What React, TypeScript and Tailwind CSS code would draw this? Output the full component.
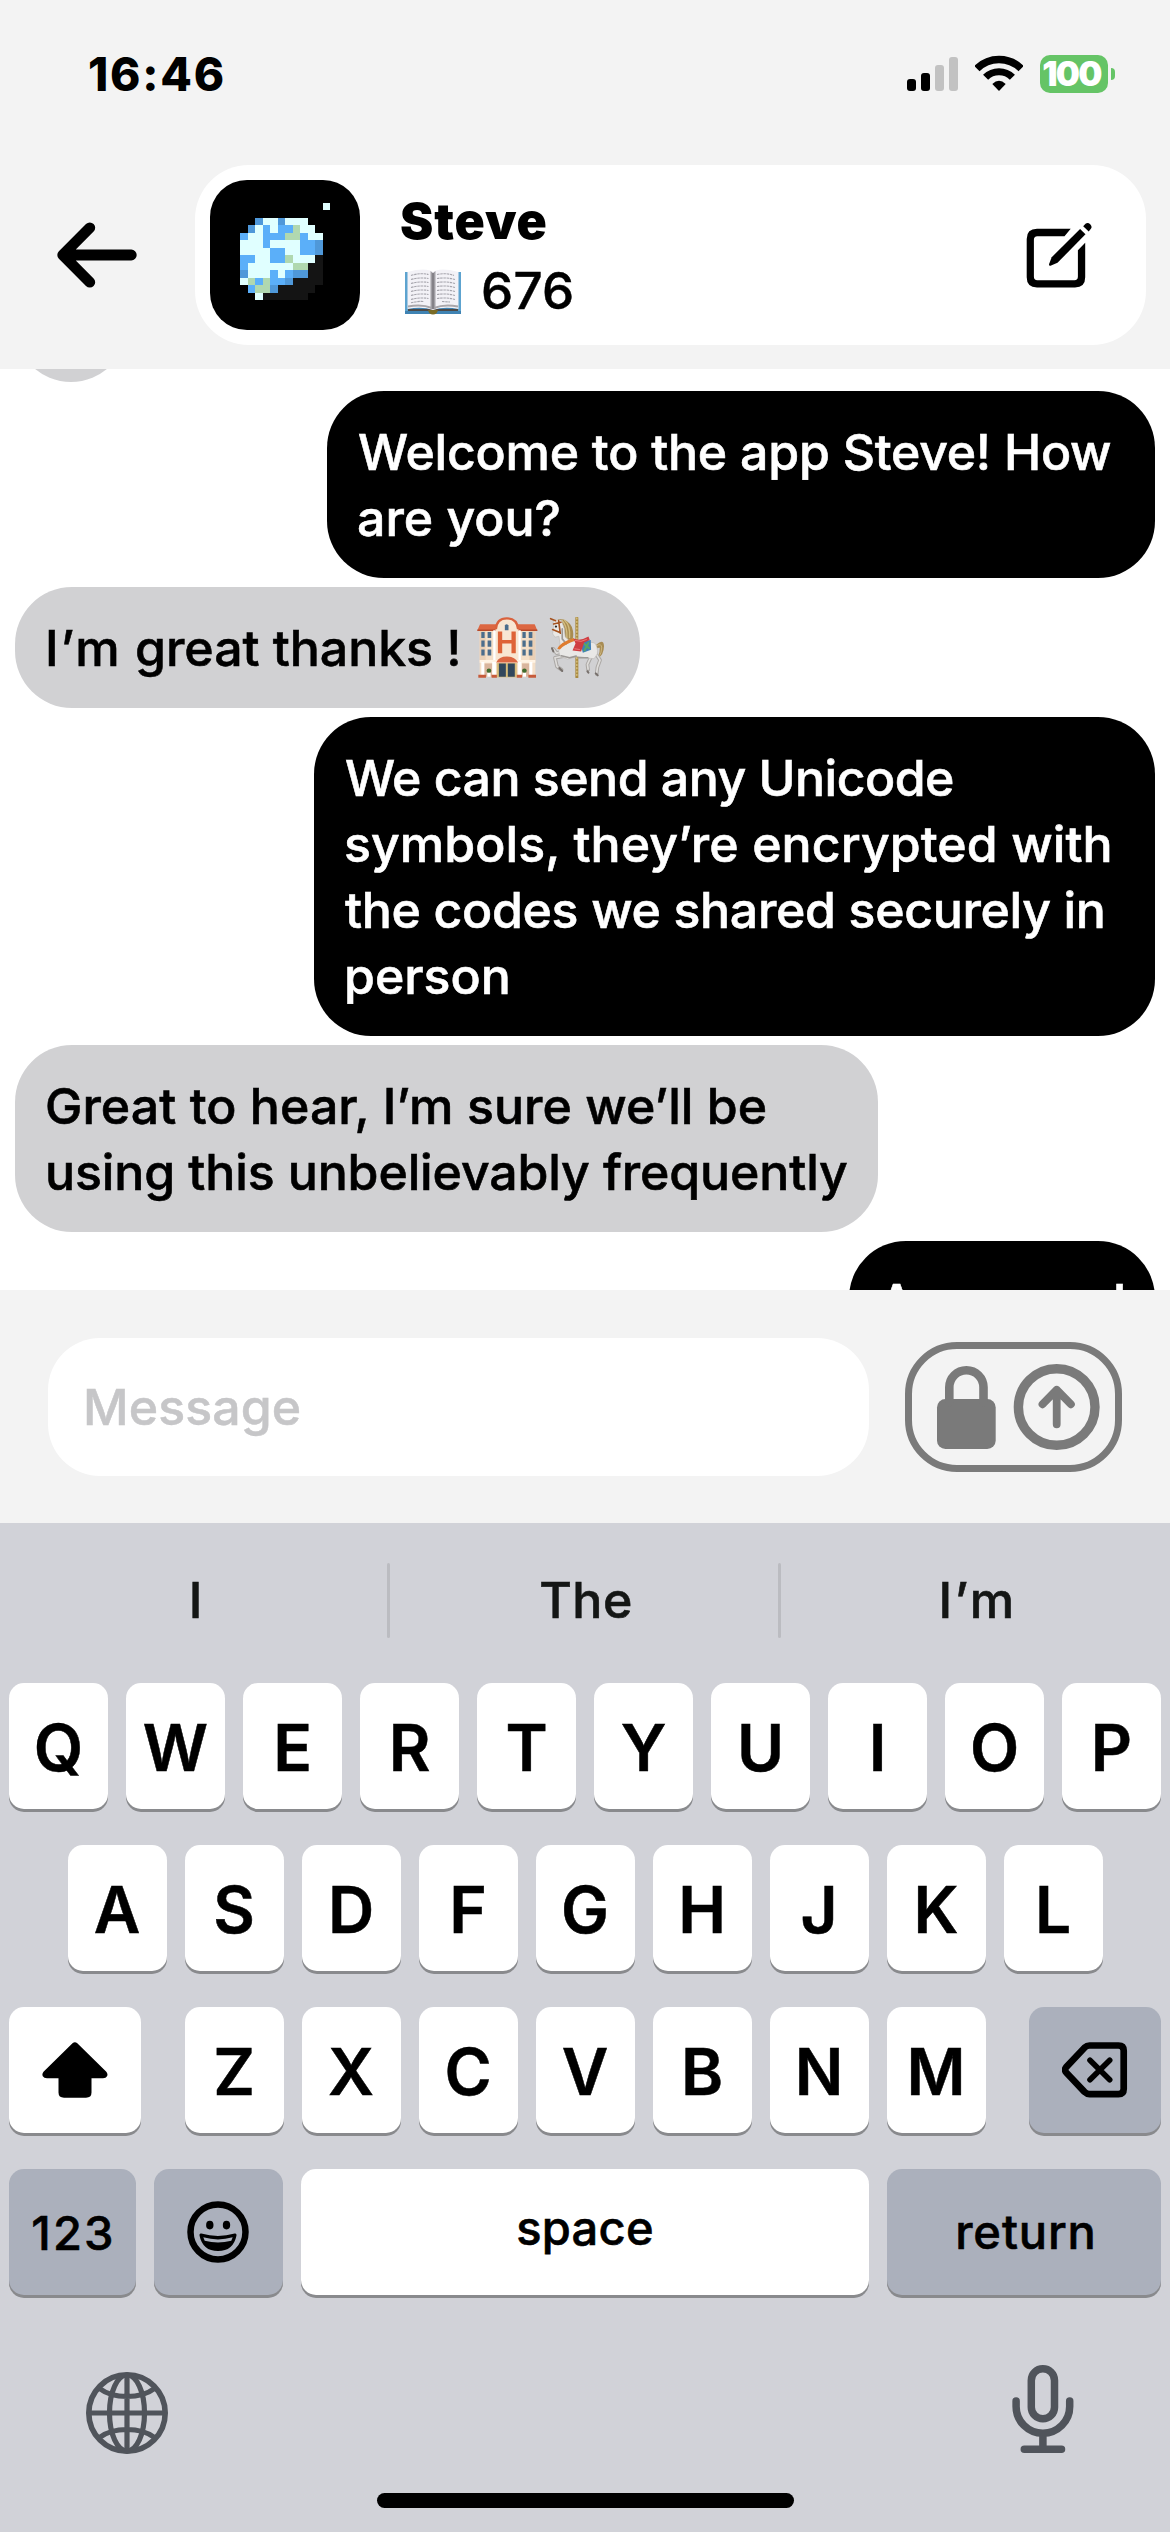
import type { ReactNode } from "react";

const PLANET = [
  "...............W....",
  "....................",
  "......DWWDWWW.......",
  ".....DWBWBBGWW......",
  "....BWWBBBGGBWW.....",
  "....WWWBWWWWBBD.....",
  "....WWWWBBWWBBD.....",
  "....BBWWBBGWWWK.....",
  "....BWWWWWWGGKK.....",
  "....DWWWBWBDDKK.....",
  "....WGBGBBDKKKK.....",
  ".....BGGDKKKKK......",
  "......WKKKKKK.......",
];

const PIXEL_FILL: Record<string, string> = {
  W: "#e0ffff",
  B: "#5baff9",
  D: "#4f98d9",
  G: "#b0d8b0",
  K: "#141414",
};

function Avatar() {
  return (
    <svg className="size-[150px] shrink-0 rounded-[37px] bg-black" viewBox="0 0 20 20" shapeRendering="crispEdges">
      {PLANET.flatMap((row, y) =>
        [...row].map((c, x) =>
          c === "." ? null : <rect key={`${x}-${y}`} x={x} y={y + 3} width={1} height={1} fill={PIXEL_FILL[c]} />,
        ),
      )}
    </svg>
  );
}

function BackArrow() {
  return (
    <svg className="h-[66px] w-[80px]" viewBox="57.5 222.5 80 66" fill="none" stroke="#000" strokeWidth={10.8} strokeLinecap="round" strokeLinejoin="round">
      <path d="M90.3 228.3 63.2 255.5 90.3 282.7M63.2 255.5H131.8" />
    </svg>
  );
}

function Book() {
  return (
    <svg className="h-[47px] w-[58px]" viewBox="0 0 58 47" role="img" aria-label="📖">
      <path d="M1 4H57V46H1Z" fill="#3f83b3" />
      <path d="M1 4H4V43H1ZM54 4H57V43H54Z" fill="#5da3cf" />
      <path d="M4 41H54V43H4Z" fill="#4d4a48" />
      <path d="M3.500 4Q18 0 26 2.500L29 4 32 2.500Q40 0 54.500 4V41Q40 38 29 42 18 38 3.500 41Z" fill="#f3f2f7" />
      <path d="M4 38.500Q18 36 28 40M54 38.500Q40 36 30 40" fill="none" stroke="#a9a6aa" strokeWidth={2} />
      <path d="M26.500 3 29 5 31.500 3V41H26.500Z" fill="#a19fa5" />
      <path d="M29 5V41" stroke="#66646a" strokeWidth={1} />
      <path d="M24 42H34Q33 46.500 29 46.500T24 42Z" fill="#7a6b26" />
      <g fill="none" stroke="#a5a4ac" strokeWidth={1.100} strokeDasharray="2.500 .7">
        <path d="M7 7.500Q16 4.500 24.500 6.500M7 11.500Q16 9 24.500 10.500M7 15.500Q16 13 24.500 14.500M7 19.500Q16 17 24.500 18.500M7 23.500Q16 21 24.500 22.500M7 27.500Q16 25 24.500 26.500M7 31.500Q16 29 24.500 30.500M7 34.800Q14 33 20 33.500" />
        <path d="M33 6.500Q42 4.500 50 7.500M33 10.500Q42 9 51 11.500M33 14.500Q42 13 51 15.500M33 18.500Q42 17 51 19.500M33 22.500Q42 21 51 23.500M33 26.500Q42 25 51 27.500M33 30.500Q42 29 51 31.500M38 33.500 46 34" />
      </g>
    </svg>
  );
}

function EditIcon() {
  return (
    <svg className="h-[66px] w-[66px]" viewBox="1026.500 222.500 66 66">
      <path d="M1071.200 229.300H1037.500Q1027.200 229.300 1027.200 239.500V277.800Q1027.200 288 1037.500 288H1075.500Q1085.700 288 1085.700 277.800V243.300L1078.400 250.700V277Q1078.400 280.800 1075 280.800H1037.800Q1034.400 280.800 1034.400 277V240.300Q1034.400 236.700 1037.800 236.700H1065Z" />
      <path d="M1080.600 229.400 1086 234.800 1058 263.300 1051 266.200Q1049.200 266.600 1049.600 264.600L1052.200 257.700Z" />
      <path d="M1083.700 226.700 1086 224.300Q1088.300 222.500 1090.700 224.700 1093.200 227.300 1091.200 229.500L1089.200 231.900Z" />
    </svg>
  );
}

function StatusIcons() {
  return (
    <div className="flex items-center">
      <div className="flex h-[34px] items-end gap-[5px]">
        <div className="h-[12px] w-[9px] rounded-[3px] bg-black" />
        <div className="h-[18px] w-[9px] rounded-[3px] bg-black" />
        <div className="h-[26px] w-[9px] rounded-[3px] bg-[#c2c2c2]" />
        <div className="h-[34px] w-[9px] rounded-[3px] bg-[#c2c2c2]" />
      </div>
      <svg className="mr-[17px] ml-[17px] h-[38px] w-[48px]" viewBox="975 55 48 38" fill="none" stroke="#000">
        <path d="M976.900 68.600A31.300 31.300 0 0 1 1021.100 68.600" strokeWidth={7.500} />
        <path d="M985.600 77.300A19 19 0 0 1 1012.400 77.300" strokeWidth={7.200} />
        <path d="M999 90.900 992.300 84Q999 77.500 1005.700 84Z" fill="#000" stroke="none" />
      </svg>
      <div className="flex h-[38px] w-[68px] items-center justify-center rounded-[10px] bg-[#65c466]">
        <span className="-ml-[5px] font-black text-[34px] leading-[38px] tracking-[-1.700px] text-white">100</span>
      </div>
      <div className="ml-[3px] h-[12px] w-[4px] rounded-r-full bg-[#65c466]" />
    </div>
  );
}

function Hotel() {
  return (
    <svg className="h-[61px] w-[61px] shrink-0" viewBox="48 54 184 184" role="img" aria-label="🏨">
      <path d="M56 90H224V234H56Z" fill="#f4dfc8" />
      <path d="M56 90H74V190H56ZM206 90H224V190H206Z" fill="#ead0b6" />
      <path d="M49 95 57 76H222L230 95Z" fill="#dc6742" />
      <path d="M49 92H230V96H49Z" fill="#b84a2a" />
      <path d="M104 190V90Q106 58 138 58T173 90V190Z" fill="#f8e6d2" />
      <path d="M105 91Q107 58 138 58T172 91" fill="none" stroke="#d9623d" strokeWidth={7} />
      <path d="M97 94H104V188H97ZM173 94H180V188H173Z" fill="#fff" />
      <path d="M111 98H124V123H152V98H165V163H152V134H124V163H111Z" fill="#de6338" />
      <g fill="#4b6d8c">
        <path d="M132 94V80Q137 72 143 80V94Z" />
        <path d="M61 99H71V117H61ZM80 99H91V117H80ZM61 125H71V144H61ZM80 125H91V144H80ZM61 152H71V170H61ZM80 152H91V170H80Z" />
        <path d="M185 99H195V117H185ZM204 99H215V117H204ZM185 125H195V144H185ZM204 125H215V144H204ZM185 152H195V170H185ZM204 152H215V170H204Z" />
      </g>
      <path d="M56 184H224V192H56Z" fill="#fff3e4" />
      <path d="M70 194H94V234H70ZM184 194H206V234H184Z" fill="#d9b59d" />
      <path d="M61 190H70V234H61ZM94 190H105V234H94ZM172 190H182V234H172ZM206 190H215V234H206Z" fill="#fff" />
      <path d="M106 191Q114 173 138 173T172 191Z" fill="#dc6742" />
      <path d="M108 193H168V236H108Z" fill="#d8bd7a" />
      <path d="M114 194H135V234H114ZM141 194H162V234H141Z" fill="#31475c" />
      <circle cx={84} cy={216} r={7} fill="#3f6b2c" />
      <circle cx={191} cy={216} r={7} fill="#3f6b2c" />
      <path d="M79 222H89V234H79ZM186 222H196V234H186Z" fill="#fff" />
      <path d="M52 228H75V237H52ZM92 228H108V237H92ZM168 228H184V237H168ZM203 228H226V237H203Z" fill="#c65b3b" />
    </svg>
  );
}

function CarouselHorse() {
  return (
    <svg className="h-[61px] w-[57px] shrink-0" viewBox="264 54 170 184" role="img" aria-label="🎠" strokeLinecap="round" strokeLinejoin="round">
      <path d="M347 57V236" stroke="#a8893f" strokeWidth={9} />
      <path d="M347 57V236" stroke="#dcc683" strokeWidth={4} strokeDasharray="3 7" />
      <path d="M406 137Q428 118 429 142 428 168 411 178 417 160 416 147 410 145 404 152Z" fill="#a88c53" />
      <path d="M408 140Q422 132 422 147 421 162 416 170" fill="none" stroke="#cdb67f" strokeWidth={3} />
      <path d="M290 60Q318 57 332 84 340 106 333 124L305 128 302 86Z" fill="#a88c50" />
      <path d="M310 64Q328 80 325 116M302 64Q319 82 317 118" fill="none" stroke="#d3bd82" strokeWidth={4} />
      <g fill="none" stroke="#aaa7a4" strokeWidth={11}>
        <path d="M306 158 286 163 276 150" />
        <path d="M306 172 281 177 287 203 301 213" />
        <path d="M399 160 386 182 379 197 381 213" />
        <path d="M404 164 417 184 409 206 407 226" />
      </g>
      <g fill="none" stroke="#dedcda" strokeWidth={5}>
        <path d="M306 158 286 163 276 150" />
        <path d="M306 172 281 177 287 203 299 212" />
        <path d="M399 160 386 182 379 197 381 211" />
        <path d="M404 164 417 184 409 206 407 222" />
      </g>
      <path d="M276 68 285 61 300 64 309 88 312 114 322 123 350 124 400 132Q411 143 409 165L399 180 382 178 350 173 319 181 299 174Q287 157 297 142L293 112 281 115 274 105 277 86Z" fill="#e9e8e6" stroke="#bdbab7" strokeWidth={2} />
      <path d="M303 90 303 120 315 135M300 171 325 177 345 172M352 177 380 177" fill="none" stroke="#9c9996" strokeWidth={5} />
      <path d="M268 59 283 65M277 75 299 70M274 92 296 101M292 65 297 103" stroke="#a5521f" strokeWidth={5} fill="none" />
      <circle cx={284} cy={83} r={3.500} fill="#2f2926" />
      <path d="M288 150Q296 130 337 117L342 126Q312 135 296 152Z" fill="#df7c2f" />
      <path d="M357 128 389 123 390 153 365 162Z" fill="#3e7fb8" />
      <path d="M369 135 384 148M382 132 370 155" stroke="#58a665" strokeWidth={6} />
      <path d="M337 119Q357 128 382 113L386 123 369 131 360 158 334 155 343 134Z" fill="#cf3d41" />
      <path d="M342 125Q360 132 376 122M341 150 355 152" fill="none" stroke="#ea7676" strokeWidth={3} />
      <path d="M294 208 303 217M379 218 382 222M404 224 410 230M272 148 276 158" stroke="#77706c" strokeWidth={6} />
    </svg>
  );
}

function Bubble({ mine = false, children }: { mine?: boolean; children: ReactNode }) {
  return (
    <div
      className={
        mine
          ? "self-end rounded-[57px] bg-black px-[30px] py-[27.500px] text-white"
          : "self-start rounded-[57px] bg-[#d1d1d3] px-[30px] py-[27.500px] text-black"
      }
    >
      {children}
    </div>
  );
}

function ComposerButton() {
  return (
    <div className="flex h-[130px] w-[217px] shrink-0 items-center rounded-[52px] border-[7.500px] border-[#7a7a7a] pl-[24px]">
      <svg className="h-[88px] w-[164px] shrink-0" viewBox="936 1363 164 88" fill="none" stroke="#7a7a7a" strokeLinecap="round" strokeLinejoin="round">
        <rect x={937} y={1399} width={58.700} height={50} rx={8.500} fill="#7a7a7a" stroke="none" />
        <path d="M949.300 1402V1387.300A17.100 17.100 0 0 1 983.500 1387.300V1402" strokeWidth={8.600} />
        <circle cx={1056.700} cy={1407} r={38.300} strokeWidth={9.400} />
        <path d="M1056.700 1424.300V1390M1042.500 1404.300 1056.700 1389.800 1070.900 1404.300" strokeWidth={7.800} />
      </svg>
    </div>
  );
}

function LetterKey({ label }: { label: string }) {
  return (
    <div className="flex h-[126px] w-[99px] items-center justify-center rounded-[15px] bg-white pt-[3px] font-semibold text-[64px] leading-none shadow-[0_3px_0_#898a8d] [-webkit-text-stroke:0.5px]">
      {label}
    </div>
  );
}

function Globe() {
  return (
    <svg className="size-[82px]" viewBox="86 2371 82 82" fill="none" stroke="#50545b" strokeWidth={5.200}>
      <circle cx={127} cy={2412} r={38.200} strokeWidth={5.600} />
      <ellipse cx={127} cy={2412} rx={17.500} ry={38} />
      <path d="M127 2373V2451M88 2412H166M99.500 2387.500Q110 2395.500 127 2395.500T154.500 2387.500M99.500 2436.500Q110 2428.500 127 2428.500T154.500 2436.500" />
    </svg>
  );
}

function Mic() {
  return (
    <svg className="h-[90px] w-[62px]" viewBox="1011.500 2364 62 90" fill="none" stroke="#50545b" strokeWidth={7.500} strokeLinecap="round">
      <rect x={1030.800} y={2368.800} width={23.200} height={50} rx={11.600} />
      <path d="M1015.600 2401V2406.500A26.800 26.800 0 0 0 1069.200 2406.500V2401M1042.400 2434V2448M1023.800 2449.300H1061" />
    </svg>
  );
}

export default function App() {
  return (
    <div className="flex h-[2532px] w-[1170px] flex-col overflow-hidden bg-white font-['Inter',sans-serif] text-black">
      <header className="h-[369px] shrink-0 bg-[#f3f3f3]">
        <div className="flex h-[148px] items-center justify-between pr-[55px] pl-[88px]">
          <span className="font-extrabold text-[46px] leading-none tracking-[1.800px]">16:46</span>
          <StatusIcons />
        </div>
        <div className="mt-[17px] flex items-center pl-[57px]">
          <BackArrow />
          <div className="ml-[58px] flex h-[180px] w-[951px] items-center rounded-[54px] bg-white pr-[54px] pl-[15px]">
            <Avatar />
            <div className="ml-[40px] flex-1 text-[50px] leading-[70px]">
              <div className="mt-[2px] font-black tracking-[0.870px]">Steve</div>
              <div className="flex items-center font-medium">
                <span className="mr-[19px] ml-[4px]">
                  <Book />
                </span>
                <span className="text-[51px] tracking-[0.300px] [-webkit-text-stroke:0.5px]">676</span>
              </div>
            </div>
            <EditIcon />
          </div>
        </div>
      </header>

      <main className="h-[921px] shrink-0 overflow-hidden">
        <div className="-mt-[108px] flex flex-col gap-[9px] px-[15px] font-medium text-[50px] leading-[66px] whitespace-nowrap [-webkit-text-stroke:0.6px]">
          <div className="h-[121px] w-[112px] rounded-[56px] bg-[#d1d1d3]" />
          <Bubble mine>
            <div className="w-[768px] pl-px tracking-[-0.240px]">Welcome to the app Steve! How</div>
            <div>are you?</div>
          </Bubble>
          <Bubble>
            <div className="flex w-[565px] items-center">
              <span className="tracking-[2px]">I’m</span>
              <span className="tracking-[-0.040px] whitespace-pre"> great thanks !</span>
              <span className="ml-[16px] flex gap-[11px]">
                <Hotel />
                <CarouselHorse />
              </span>
            </div>
          </Bubble>
          <Bubble mine>
            <div className="w-[781px] pl-px tracking-[-0.520px]">We can send any Unicode</div>
            <div className="tracking-[0.080px]">symbols, they’re encrypted with</div>
            <div className="pl-px tracking-[-0.330px]">the codes we shared securely in</div>
            <div>person</div>
          </Bubble>
          <Bubble>
            <div className="w-[803px] tracking-[0.050px]">Great to hear, I’m sure we’ll be</div>
            <div className="tracking-[-0.120px]">using this unbelievably frequently</div>
          </Bubble>
          <Bubble mine>
            <div className="w-[246px]">Awesome!</div>
          </Bubble>
        </div>
      </main>

      <section className="flex h-[233px] shrink-0 items-center justify-between bg-[#f3f3f3] px-[48px] pt-px">
        <div className="flex h-[138px] w-[821px] items-center rounded-[52px] bg-white pl-[35px] font-medium text-[50px] tracking-[0.100px] text-[#c6c6c8] [-webkit-text-stroke:0.5px]">
          Message
        </div>
        <ComposerButton />
      </section>

      <section className="flex h-[1009px] shrink-0 flex-col bg-[#d1d2d8]">
        <div className="flex h-[155px] items-center font-medium text-[50px] text-[#141615] [-webkit-text-stroke:0.6px]">
          <div className="w-[387px] pl-[4px] text-center">I</div>
          <div className="h-[75px] w-[3px] rounded-full bg-[#bbbcc1]" />
          <div className="w-[388px] pl-1 text-center tracking-[0.500px]">The</div>
          <div className="h-[75px] w-[3px] rounded-full bg-[#bbbcc1]" />
          <div className="flex-1 pl-[4px] text-center tracking-[2.400px]">I’m</div>
        </div>

        <div className="mt-[5px] flex flex-col gap-[36px] px-[9px]">
          <div className="flex justify-between">
            {[..."QWERTYUIOP"].map((c) => (
              <LetterKey key={c} label={c} />
            ))}
          </div>
          <div className="flex justify-center gap-[18px]">
            {[..."ASDFGHJKL"].map((c) => (
              <LetterKey key={c} label={c} />
            ))}
          </div>
          <div className="flex justify-between">
            <div className="flex h-[126px] w-[132px] items-center justify-center rounded-[15px] bg-white shadow-[0_3px_0_#898a8d]">
              <svg className="h-[56px] w-[66px]" viewBox="42.500 2042 66 56">
                <path d="M73 2043.200Q75.400 2041.200 77.800 2043.200L106.800 2071.700Q108.700 2074 107.500 2076.300 106.500 2078.200 103.500 2078.200H92V2092.500Q92 2097.700 86.500 2097.700H64.500Q59 2097.700 59 2092.500V2078.200H47.500Q44.500 2078.200 43.300 2076.300 42.200 2074 44 2071.700Z" />
              </svg>
            </div>
            <div className="flex gap-[18px]">
              {[..."ZXCVBNM"].map((c) => (
                <LetterKey key={c} label={c} />
              ))}
            </div>
            <div className="flex h-[126px] w-[132px] items-center justify-center rounded-[15px] bg-[#abb0bc] shadow-[0_3px_0_#898a8d]">
              <svg className="h-[56px] w-[66px]" viewBox="1061.500 2042.500 66 56" fill="none" stroke="#000" strokeLinecap="round" strokeLinejoin="round">
                <path d="M1089 2046H1118Q1123.200 2046 1123.200 2051V2089.500Q1123.200 2094.600 1118 2094.600H1089Q1086.300 2094.600 1084 2092.400L1065.700 2073Q1063.500 2070.300 1065.700 2067.600L1084 2048.200Q1086.300 2046 1089 2046Z" strokeWidth={6.700} />
                <path d="M1089.500 2060.800 1109.200 2080.200M1109.200 2060.800 1089.500 2080.200" strokeWidth={5.600} />
              </svg>
            </div>
          </div>
          <div className="flex gap-[18px] font-medium text-[47px] leading-none [-webkit-text-stroke:0.6px]">
            <div className="flex h-[126px] w-[127px] items-center justify-center rounded-[15px] bg-[#abb0bc] pl-[2px] tracking-[2.200px] shadow-[0_3px_0_#898a8d]">
              123
            </div>
            <div className="flex h-[126px] w-[129px] items-center justify-center rounded-[15px] bg-[#abb0bc] pr-[2px] shadow-[0_3px_0_#898a8d]">
              <svg className="size-[62px]" viewBox="186.500 2201.500 62 62">
                <circle cx={217.500} cy={2232.400} r={27.500} fill="none" stroke="#000" strokeWidth={6.500} />
                <ellipse cx={209.300} cy={2225.600} rx={3.700} ry={4.300} />
                <ellipse cx={226} cy={2225.600} rx={3.700} ry={4.300} />
                <path d="M200.800 2234Q217.500 2238.800 234.200 2234 236.300 2233.600 236 2236 232.800 2251.600 217.500 2251.600T199 2236Q198.700 2233.600 200.800 2234Z" />
                <path d="M202.800 2237.800Q217.500 2242 232.200 2237.800L230.800 2241.300Q217.500 2244.800 204.200 2241.300Z" fill="#abb0bc" />
              </svg>
            </div>
            <div className="flex h-[126px] w-[568px] items-center justify-center rounded-[15px] bg-white pb-[9px] tracking-[0.300px] shadow-[0_3px_0_#898a8d]">
              space
            </div>
            <div className="flex h-[126px] w-[274px] items-center justify-center rounded-[15px] bg-[#abb0bc] pb-px pl-[4px] tracking-[0.900px] shadow-[0_3px_0_#898a8d]">
              return
            </div>
          </div>
        </div>

        <div className="mt-[69px] flex h-[90px] items-end justify-between pr-[96px] pl-[86px]">
          <Globe />
          <Mic />
        </div>
        <div className="mx-auto mt-[39px] h-[15px] w-[417px] rounded-full bg-black" />
      </section>
    </div>
  );
}
